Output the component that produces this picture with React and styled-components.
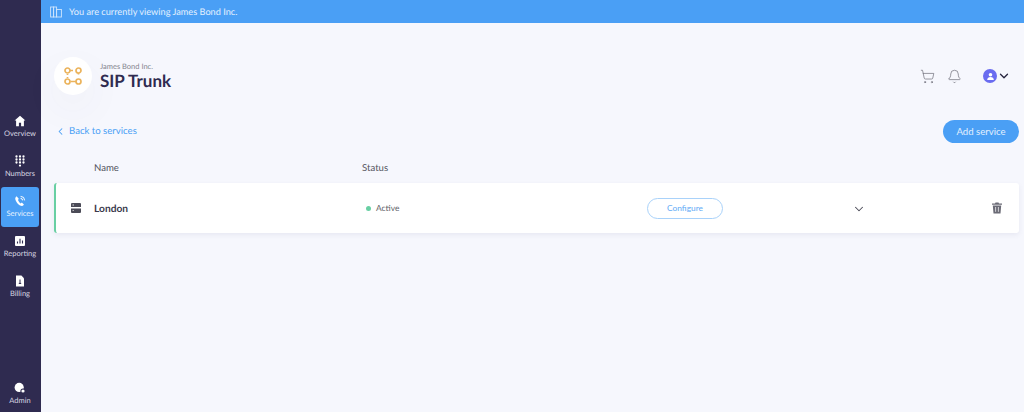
import React from 'react'
import styled, { createGlobalStyle } from 'styled-components'
import { ChevronLeft, ChevronDown, ShoppingCart, Bell } from 'lucide-react'

const GlobalStyle = createGlobalStyle`
    html, body {
        margin: 0;
        height: 100%;
        background: #f6f7fd;
    }
    body {
        font-family: "Lato", "Open Sans", sans-serif;
        text-rendering: geometricPrecision;
        overflow: hidden;
    }
    #root {
        height: 100%;
    }
`;

const Page = styled.div`
    display: flex;
    width: 1024px;
    height: 412px;
`;

const Sidebar = styled.nav`
    width: 41px;
    flex-shrink: 0;
    background-color: #2f2b50;
    display: flex;
    flex-direction: column;
    padding: 107px 2px 7px 1px;
    box-sizing: border-box;
`;

const NavList = styled.div`
    display: flex;
    flex-direction: column;
    flex: 1;
`;

const NavItem = styled.div`
    height: ${(p) => (p.$auto ? 'auto' : '40px')};
    padding-bottom: ${(p) => (p.$auto ? '0' : '2px')};
    box-sizing: border-box;
    border-radius: 3px;
    display: flex;
    flex-direction: column;
    align-items: center;
    justify-content: center;
    gap: 2px;
    color: ${(p) => (p.$active ? '#e8f3ff' : '#d8d7e2')};
    background-color: ${(p) => (p.$active ? '#4a9ff5' : 'transparent')};
    font-size: 7.5px;
    line-height: 9px;
    svg {
        display: block;
    }
`;

const Main = styled.div`
    flex: 1;
    min-width: 0;
    display: flex;
    flex-direction: column;
`;

const Banner = styled.div`
    height: 23px;
    flex-shrink: 0;
    background-color: #4a9ff5;
    color: #e3f0fe;
    font-size: 9.2px;
    display: flex;
    align-items: center;
    gap: 7px;
    padding-left: 9px;
`;

const Content = styled.div`
    flex: 1;
    display: flex;
    flex-direction: column;
    padding: 33px 5px 0 13px;
`;

const Header = styled.header`
    display: flex;
    align-items: center;
    justify-content: space-between;
    height: 40px;
`;

const TitleGroup = styled.div`
    display: flex;
    align-items: center;
    gap: 8px;
`;

const LogoCircle = styled.div`
    width: 38px;
    height: 38px;
    border-radius: 50%;
    background: #fff;
    display: flex;
    align-items: center;
    justify-content: center;
    box-shadow: 0 14px 40px rgba(70, 70, 120, 0.05);
`;

const Company = styled.div`
    font-size: 7.5px;
    line-height: 9px;
    color: #85858f;
`;

const Title = styled.h1`
    margin: 1px 0 0;
    font-size: 17px;
    line-height: 18px;
    font-weight: 700;
    color: #2f2b50;
`;

const HeaderIcons = styled.div`
    display: flex;
    align-items: center;
    color: #6b6b76;
    padding-right: 8px;
`;

const IconSlot = styled.div`
    display: flex;
    margin-right: ${(p) => p.$gap}px;
`;

const Avatar = styled.div`
    width: 14px;
    height: 14px;
    border-radius: 50%;
    background: #6a6cf0;
    display: flex;
    align-items: center;
    justify-content: center;
`;

const ActionBar = styled.div`
    display: flex;
    align-items: center;
    justify-content: space-between;
    margin-top: 23px;
    height: 24px;
`;

const BackLink = styled.a`
    display: flex;
    align-items: center;
    gap: 3px;
    color: #4a9ff5;
    font-size: 9.6px;
    padding-left: 1px;
`;

const AddButton = styled.button`
    width: 76px;
    height: 23px;
    border: none;
    border-radius: 12px;
    background-color: #4a9ff5;
    color: #e3f0fe;
    font: inherit;
    font-size: 9.6px;
    padding: 0;
`;

const Columns = styled.div`
    display: grid;
    grid-template-columns: 268px 1fr;
    padding-left: 40px;
    margin-top: 20px;
    font-size: 9.6px;
    line-height: 12px;
    color: #55555f;
`;

const Row = styled.div`
    margin-top: 8px;
    height: 50px;
    background: #fff;
    border-left: 2px solid #68cfa3;
    border-radius: 3px;
    box-shadow: 0 2px 5px rgba(70, 70, 120, 0.08);
    display: grid;
    grid-template-columns: 38px 272px 282px 1fr 27px;
    align-items: center;
`;

const RowIcon = styled.div`
    display: flex;
    justify-content: flex-end;
    padding-right: 13px;
`;

const RowName = styled.div`
    padding-top: 2px;
    font-size: 10.2px;
    font-weight: 700;
    color: #3b3a4c;
`;

const StatusCell = styled.div`
    display: flex;
    align-items: center;
    gap: 5px;
    font-size: 8.4px;
    color: #5f5f69;
`;

const Dot = styled.span`
    width: 5px;
    height: 5px;
    border-radius: 50%;
    background: #68cfa3;
`;

const RowActions = styled.div`
    display: flex;
    align-items: center;
    margin-left: -1px;
`;

const ConfigureButton = styled.button`
    width: 76px;
    height: 21px;
    border: 1px solid #a9d2fa;
    border-radius: 11px;
    background: #fff;
    color: #62aaf6;
    font: inherit;
    font-size: 8.4px;
    padding: 0;
`;

const ChevronCell = styled.div`
    display: flex;
    padding: 2px 0 0 129px;
    color: #4b4b57;
`;

const TrashCell = styled.div`
    display: flex;
`;

const navItems = [
    { label: 'Overview', icon: <path d="M6 .8.6 5.6h1.5v5.6h2.8V7.8h2.2v3.4h2.8V5.6h1.5z" fill="#fff" /> },
    {
        label: 'Numbers',
        icon: (
            <g fill="#fff">
                {[1.5, 4.5, 7.5].map((y) =>
                    [2.5, 6, 9.5].map((x) => <circle key={`${x}-${y}`} cx={x} cy={y} r="1.15" />)
                )}
                <circle cx="6" cy="10.6" r="1.1" />
            </g>
        ),
    },
    {
        label: 'Services',
        active: true,
        icon: (
            <g fill="none" stroke="#fff">
                <path d="M2.6 1.2c-1.6 1-1.8 2.8-.5 5 1.3 2.4 3 4 4.8 4.6 1.2.4 2.3-.2 3-1.4L7.8 7.6 6.6 8.4C5.4 7.6 4.4 6.2 3.9 4.8l1-.9z" fill="#fff" stroke="none" />
                <path d="M6.6 1.4a4 4 0 0 1 4 4" strokeWidth="1" />
                <path d="M6.6 3.4a2 2 0 0 1 2 2" strokeWidth="1" />
            </g>
        ),
    },
    {
        label: 'Reporting',
        icon: (
            <g>
                <rect x="1" y="1" width="10" height="10" rx="1" fill="#fff" />
                <path d="M3.5 8.5V6.5M6 8.5V3.8M8.5 8.5V5.5" stroke="#2f2b50" strokeWidth="1.1" />
            </g>
        ),
    },
    {
        label: 'Billing',
        icon: (
            <g>
                <path d="M2 .6h5.4L10 3.2v8.2H2z" fill="#fff" />
                <path d="M6 4.5v4.5M4.8 8.4h2.4" stroke="#2f2b50" strokeWidth="1" />
            </g>
        ),
    },
];

const NavIcon = ({ children }) => (
    <svg width="12" height="12" viewBox="0 0 12 12">
        {children}
    </svg>
);

const BuildingIcon = () => (
    <svg width="12" height="12" viewBox="0 0 12 12" fill="none" stroke="#cfe5fc" strokeWidth="0.9">
        <rect x="0.6" y="1" width="3" height="10" />
        <rect x="3.6" y="1" width="3" height="10" />
        <rect x="6.6" y="3.5" width="4.8" height="7.5" />
    </svg>
);

const TrunkLogo = () => (
    <svg width="18" height="18" viewBox="0 0 18 18" fill="none" stroke="#ebb35c" strokeWidth="1.7">
        <circle cx="3.5" cy="3.5" r="2.5" />
        <circle cx="14.5" cy="3.5" r="2.5" />
        <circle cx="3.5" cy="14.5" r="2.5" />
        <circle cx="14.5" cy="14.5" r="2.5" />
        <path d="M6 3.5h3M3.5 7v1M3.5 10v1M6.5 14.5h5.5M14.5 6v1.5" />
    </svg>
);

const ServerIcon = () => (
    <svg width="10" height="10" viewBox="0 0 10 10" fill="#4b4b57">
        <path d="M0 1a1 1 0 0 1 1-1h8a1 1 0 0 1 1 1v3H0zM0 5.6h10V9a1 1 0 0 1-1 1H1a1 1 0 0 1-1-1z" />
        <path d="M1.6 1.6h1.2v.9H1.6zM1.6 7.2h1.2v.9H1.6z" fill="#fff" />
    </svg>
);

const TrashIcon = () => (
    <svg width="10" height="12" viewBox="0 0 10 12">
        <path d="M3.5.5h3l.5 1h3v1.2H0V1.5h3zM.8 3.4h8.4L8.5 11.5h-7z" fill="#6b6b76" />
        <path d="M3.6 5v4.8M6.4 5v4.8" stroke="#fff" strokeWidth="0.7" />
    </svg>
);

const AdminIcon = () => (
    <svg width="12" height="12" viewBox="0 0 12 12">
        <circle cx="5.2" cy="5.4" r="4.6" fill="#fff" />
        <circle cx="9" cy="9" r="2.6" fill="#2f2b50" />
        <circle cx="9" cy="9" r="1.6" fill="#fff" />
    </svg>
);

const App = () => {
    return (
        <>
            <GlobalStyle />
            <Page>
                <Sidebar>
                    <NavList>
                        {navItems.map((item) => (
                            <NavItem key={item.label} $active={item.active}>
                                <NavIcon>{item.icon}</NavIcon>
                                {item.label}
                            </NavItem>
                        ))}
                    </NavList>
                    <NavItem $auto>
                        <AdminIcon />
                        Admin
                    </NavItem>
                </Sidebar>
                <Main>
                    <Banner>
                        <BuildingIcon />
                        You are currently viewing James Bond Inc.
                    </Banner>
                    <Content>
                        <Header>
                            <TitleGroup>
                                <LogoCircle>
                                    <TrunkLogo />
                                </LogoCircle>
                                <div>
                                    <Company>James Bond Inc.</Company>
                                    <Title>SIP Trunk</Title>
                                </div>
                            </TitleGroup>
                            <HeaderIcons>
                                <IconSlot $gap={12}>
                                    <ShoppingCart size={15} strokeWidth={1.1} />
                                </IconSlot>
                                <IconSlot $gap={21}>
                                    <Bell size={15} strokeWidth={1.1} />
                                </IconSlot>
                                <Avatar>
                                    <svg width="9" height="9" viewBox="0 0 9 9" fill="#fff">
                                        <circle cx="4.5" cy="2.8" r="1.8" />
                                        <path d="M1.2 8c0-2 1.4-3 3.3-3s3.3 1 3.3 3z" />
                                    </svg>
                                </Avatar>
                                <ChevronDown size={14} strokeWidth={2.2} color="#26243d" />
                            </HeaderIcons>
                        </Header>
                        <ActionBar>
                            <BackLink>
                                <ChevronLeft size={11} strokeWidth={2.2} />
                                Back to services
                            </BackLink>
                            <AddButton>Add service</AddButton>
                        </ActionBar>
                        <Columns>
                            <span>Name</span>
                            <span>Status</span>
                        </Columns>
                        <Row>
                            <RowIcon>
                                <ServerIcon />
                            </RowIcon>
                            <RowName>London</RowName>
                            <StatusCell>
                                <Dot />
                                Active
                            </StatusCell>
                            <RowActions>
                                <ConfigureButton>Configure</ConfigureButton>
                                <ChevronCell>
                                    <ChevronDown size={14} strokeWidth={1.8} />
                                </ChevronCell>
                            </RowActions>
                            <TrashCell>
                                <TrashIcon />
                            </TrashCell>
                        </Row>
                    </Content>
                </Main>
            </Page>
        </>
    )
}

export default App
